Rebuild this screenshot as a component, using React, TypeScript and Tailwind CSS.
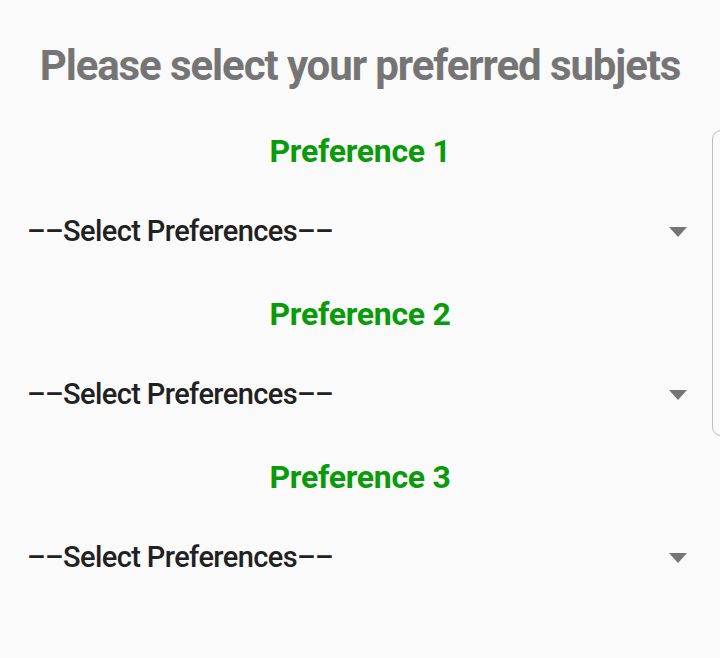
import React from "react";

function Arrow() {
  return (
    <svg width="18" height="10" viewBox="0 0 18 10" className="shrink-0">
      <polygon points="0,0 18,0 9,10" fill="#757575" />
    </svg>
  );
}

function Pref({ n }: { n: number }) {
  return (
    <div className="flex flex-col">
      <div className="h-[81px] flex items-center justify-center text-[32px] font-bold text-[#0a9b0a] tracking-[-0.3px]">
        Preference {n}
      </div>
      <div className="h-[82px] flex items-center justify-between pl-[27px] pr-[33px]">
        <span className="text-[29px] font-medium text-[#212121] tracking-[-0.6px]">––Select Preferences––</span>
        <Arrow />
      </div>
    </div>
  );
}

export default function App() {
  return (
    <div
      className="relative w-[720px] h-[658px] bg-[#fafafa] overflow-hidden"
      style={{ fontFamily: "Roboto, 'Noto Sans', sans-serif" }}
    >
      <div className="pt-[38px] h-[110px] text-center text-[42px] font-bold text-[#757575] tracking-[-1.1px] leading-[56px]">
        Please select your preferred subjets
      </div>
      <Pref n={1} />
      <Pref n={2} />
      <Pref n={3} />
      <div className="absolute left-[712px] top-[130px] w-[20px] h-[306px] rounded-[9px] border border-[#bdbdbd] bg-[#fafafa]" />
    </div>
  );
}
